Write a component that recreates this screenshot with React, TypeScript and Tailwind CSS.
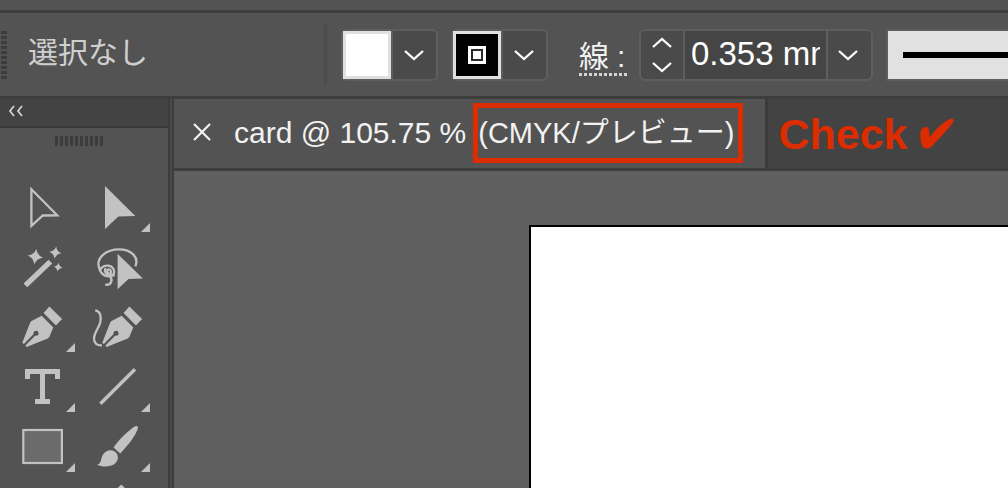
import type { ReactNode } from "react";

function Chevron({ up = false }: { up?: boolean }) {
  return (
    <svg width="20" height="12" viewBox="0 0 20 12" fill="none" stroke="currentColor" strokeWidth="2.3" aria-hidden="true">
      <path d={up ? "M1 10 10 2l9 8" : "M1 2l9 8 9-8"} />
    </svg>
  );
}

function Bars({ vertical = false }: { vertical?: boolean }) {
  return (
    <div className={vertical ? "flex flex-col gap-[2px]" : "flex gap-[2px]"}>
      {Array.from({ length: 10 }, (_, i) => (
        <span key={i} className={vertical ? "h-[3px] w-[6px] bg-[#3c3c3c]" : "h-[10px] w-[3px] bg-[#3c3c3c]"} />
      ))}
    </div>
  );
}

function SwatchControl({ label, children }: { label: string; children?: ReactNode }) {
  return (
    <div className="flex h-[52px] shrink-0 rounded-md border-2 border-[#5e5e5e] bg-[#4a4a4a]">
      <button
        type="button"
        aria-label={label}
        className={
          children
            ? "flex w-12 items-center justify-center border-[3px] border-[#e0e0e0] bg-black"
            : "flex w-12 border-[3px] border-[#e0e0e0] bg-white"
        }
      >
        {children}
      </button>
      <button
        type="button"
        aria-label={label + " メニュー"}
        className="flex w-[45px] items-center justify-center border-l-2 border-[#5e5e5e] pr-[2px] text-white"
      >
        <Chevron />
      </button>
    </div>
  );
}

function Nib() {
  return (
    <>
      <path d="M44.4 9.6 57.1 22 51 28.4 38.6 16z" />
      <path d="M36.7 18.7 48.3 30.5 44.4 39.8Q43.9 41 42.6 41.5L21.7 50 20.4 48.6 17.3 45.7 25.2 25.6Q25.7 24.3 27 23.7z" />
      <path d="M18.2 49.2 30.7 36.5" stroke="#535353" strokeWidth="2.2" />
      <circle cx="31" cy="36.2" r="2.5" fill="#535353" />
    </>
  );
}

const star = "M0-7Q1.4-1.4 7 0 1.4 1.4 0 7-1.4 1.4-7 0-1.4-1.4 0-7z";

const tools: { name: string; more?: boolean; art: ReactNode }[] = [
  {
    name: "ダイレクト選択",
    art: <path d="M26.4 12.3V48.8L37.8 38.5 52.2 38.3z" fill="none" stroke="#c2c2c2" strokeWidth="2.3" />,
  },
  { name: "選択", more: true, art: <path d="M25 9V52L38.4 39.6 55.3 39z" /> },
  {
    name: "自動選択",
    art: (
      <>
        <path d="M20.4 48.4 45.4 24.6" stroke="#c2c2c2" strokeWidth="5.4" />
        <path d={star} transform="translate(30.3 19.6) rotate(8) scale(1.1)" />
        <path d={star} transform="translate(50.4 15.5) rotate(8) scale(.88)" />
        <path d={star} transform="translate(53.1 30.1) rotate(8) scale(.64)" />
      </>
    ),
  },
  {
    name: "なげなわ",
    art: (
      <>
        <g fill="none" stroke="#c2c2c2" strokeWidth="2.3">
          <path d="M55.3 29.4C59.5 20 51 12.3 39 12.3 26 12.3 16.8 20.6 18.7 29.2 19.4 35 23.3 39.2 28.8 39.3 33.6 39.3 35.4 35 33 31.4 30.4 27.4 22.6 27.8 20.4 32.8" />
          <path d="M25.8 31.2C23.6 34.4 26.4 38 29.3 37.2 32 36.4 31 31.6 28.2 32.6 25.8 34 28.4 39.3 34.8 38.3" />
          <path d="M29.8 39.4C33.4 42.6 31 48.8 25.3 47.6" />
        </g>
        <path d="M37.6 16.8V52.2L48.5 42 62.9 41.6z" />
      </>
    ),
  },
  { name: "ペン", more: true, art: <Nib /> },
  {
    name: "曲線",
    art: (
      <>
        <path
          d="M15.2 13.4C20 14.2 21.7 18.6 20.2 25.6 18.7 31.5 14.3 35 14 41.3 14 46.6 17 48.8 22 48.4"
          fill="none"
          stroke="#c2c2c2"
          strokeWidth="2.3"
        />
        <g transform="translate(5 0)">
          <Nib />
        </g>
      </>
    ),
  },
  { name: "文字", more: true, art: <path d="M20 12H55V22H50V17H40V42H45V47H30V42H35V17H25V22H20z" /> },
  { name: "直線", more: true, art: <path d="M20.4 46.8 55 12.2" stroke="#c2c2c2" strokeWidth="3.4" /> },
  {
    name: "長方形",
    more: true,
    art: <rect x="18.3" y="13" width="38.6" height="33" fill="#6b6b6b" stroke="#c2c2c2" strokeWidth="2.2" />,
  },
  {
    name: "ブラシ",
    more: true,
    art: (
      <>
        <path d="M33.6 30.4C38.6 23.4 46.2 15.2 54.6 9.6 57 8.2 58.6 9.6 57.7 12 54.6 20.4 46.6 30 40.2 36.5z" />
        <path d="M17.2 47.7C22.2 46 20.2 41.6 23.2 37.2 27.4 31.2 34.6 32.4 37.2 37.2 39.6 42.4 35.8 47.4 30.4 48.8 26 50 20.6 49.6 17.2 47.7z" />
      </>
    ),
  },
];

function Tool({ name, more, art }: { name: string; more?: boolean; art: ReactNode }) {
  return (
    <button type="button" aria-label={name} className="block h-[60px]">
      <svg width="75" height="60" viewBox="0 0 75 60" fill="#c2c2c2" aria-hidden="true">
        {art}
        {more && <path d="M70 46V55H61z" />}
      </svg>
    </button>
  );
}

export default function App() {
  return (
    <div className="flex h-screen flex-col overflow-hidden bg-[#535353] font-['Liberation_Sans','Noto_Sans_CJK_JP',sans-serif]">
      <div className="h-[10px] shrink-0" />
      <header className="flex h-[89px] shrink-0 items-center border-y-[3px] border-[#3d3d3d] pl-px">
        <Bars vertical />
        <span className="w-[317px] shrink-0 pb-1 pl-[21px] text-[30px] leading-8 whitespace-nowrap text-[#cfcfcf]">選択なし</span>
        <span className="h-[62px] w-[3px] shrink-0 bg-[#4c4c4c]" />
        <div className="flex min-w-0 flex-1 items-center pl-[14px]">
          <SwatchControl label="塗り" />
          <div className="w-[13px] shrink-0" />
          <SwatchControl label="線">
            <span className="flex h-[18px] w-[18px] items-center justify-center border-[3px] border-white bg-[#2b2b2b]">
              <span className="h-2 w-2 bg-white" />
            </span>
          </SwatchControl>
          <label htmlFor="stroke-width" className="ml-[31px] flex shrink-0 flex-col pt-2 text-[30px] leading-8 whitespace-nowrap text-[#f2f2f2]">
            <span className="flex gap-2">
              <span>線</span>
              <span>:</span>
            </span>
            <svg width="48" height="3" aria-hidden="true">
              <path d="M0 1.5H48" stroke="#d4d4d4" strokeWidth="3" strokeDasharray="3 2" />
            </svg>
          </label>
          <div className="ml-3 flex h-[52px] shrink-0 rounded-md border-2 border-[#5e5e5e] bg-[#4a4a4a] text-white">
            <div className="flex w-[42px] flex-col">
              <button type="button" aria-label="増やす" className="flex flex-1 items-center justify-center">
                <Chevron up />
              </button>
              <button type="button" aria-label="減らす" className="flex flex-1 items-center justify-center">
                <Chevron />
              </button>
            </div>
            <div className="flex w-[145px] border-x-2 border-[#5e5e5e] bg-[#454545] px-[6px] pb-[2px]">
              <input
                id="stroke-width"
                defaultValue="0.353 mm"
                className="w-full min-w-0 bg-transparent text-[33px] leading-9 text-white outline-none"
              />
            </div>
            <button type="button" aria-label="線幅メニュー" className="flex w-[43px] items-center justify-center pr-1">
              <Chevron />
            </button>
          </div>
          <button
            type="button"
            aria-label="線のプロファイル"
            className="ml-[13px] flex h-[52px] min-w-0 flex-1 items-center border-y-2 border-l-2 border-[#5e5e5e] bg-[#e1e1e1] pl-[15px]"
          >
            <span className="h-[6px] flex-1 bg-black" />
          </button>
        </div>
      </header>

      <div className="flex min-h-0 flex-1">
        <aside className="w-[170px] shrink-0 overflow-hidden border-r-2 border-[#3d3d3d]">
          <div className="flex h-[29px] items-center border-b-2 border-[#3a3a3a] bg-[#434343] pl-2">
            <button type="button" aria-label="折りたたむ" className="-mt-1">
              <svg width="16" height="12" viewBox="0 0 16 12" fill="none" stroke="#d6d6d6" strokeWidth="1.7" aria-hidden="true">
                <path d="M6 1 2 6l4 5M14 1l-4 5 4 5" />
              </svg>
            </button>
          </div>
          <div className="flex justify-center pt-2 pr-[10px]">
            <Bars />
          </div>
          <div className="mt-[31px] grid grid-cols-[75px_75px] pl-[5px]">
            {tools.map((t) => (
              <Tool key={t.name} name={t.name} more={t.more} art={t.art} />
            ))}
            <Tool name="Shaper" art={null} />
            <Tool name="鉛筆" art={<path d="M41.3 7.5 46 12 36.6 12z" />} />
          </div>
        </aside>
        <div className="w-[2px] shrink-0 bg-[#4a4a4a]" />
        <main className="flex min-w-0 flex-1 flex-col border-l-2 border-[#3d3d3d] bg-[#5f5f5f]">
          <div className="flex h-[72px] shrink-0 border-b-[3px] border-[#3d3d3d] bg-[#434343]">
            <div className="flex shrink-0 items-center border-r-[3px] border-[#3a3a3a] bg-[#535353] pr-[22px] pb-[2px] pl-[19px] leading-8 whitespace-nowrap text-[#f2f2f2]">
              <button type="button" aria-label="閉じる" className="mr-[23px] mb-[2px]">
                <svg width="18" height="18" viewBox="0 0 18 18" stroke="currentColor" strokeWidth="2.2" aria-hidden="true">
                  <path d="M1 1 17 17M17 1 1 17" />
                </svg>
              </button>
              <span className="text-[30px]">card @ 105.75 %</span>
              <span className="ml-[7px] flex h-[60px] items-center border-[5px] border-[#dc2c00] pr-1 text-[29px]">
                (CMYK/プレビュー)
              </span>
            </div>
            <div className="flex items-center gap-3 pl-[10px] text-[43px] leading-[48px] font-bold whitespace-nowrap text-[#dc2c00]">
              <span>Check</span>
              <svg width="34" height="31" viewBox="0 0 34 31" fill="currentColor" aria-hidden="true">
                <path d="M.4 14.500C.8 11 3 8.800 5.500 9 8 9 9 10.500 9 12.500L9.600 19.200C15 12 22 5 29.500 1 32-.4 34.500 1 33.200 4.200 28.500 11 21 18.500 14.500 25.500 11.500 29 9 31 6.500 30.600 3.500 30.300 1.800 28.500 1.200 25 .4 21 .2 18 .4 14.500z" />
              </svg>
            </div>
          </div>
          <div className="flex min-h-0 flex-1 pt-[54px] pl-[355px]">
            <div className="flex-1 border-t-2 border-l-2 border-black bg-white" />
          </div>
        </main>
      </div>
    </div>
  );
}
